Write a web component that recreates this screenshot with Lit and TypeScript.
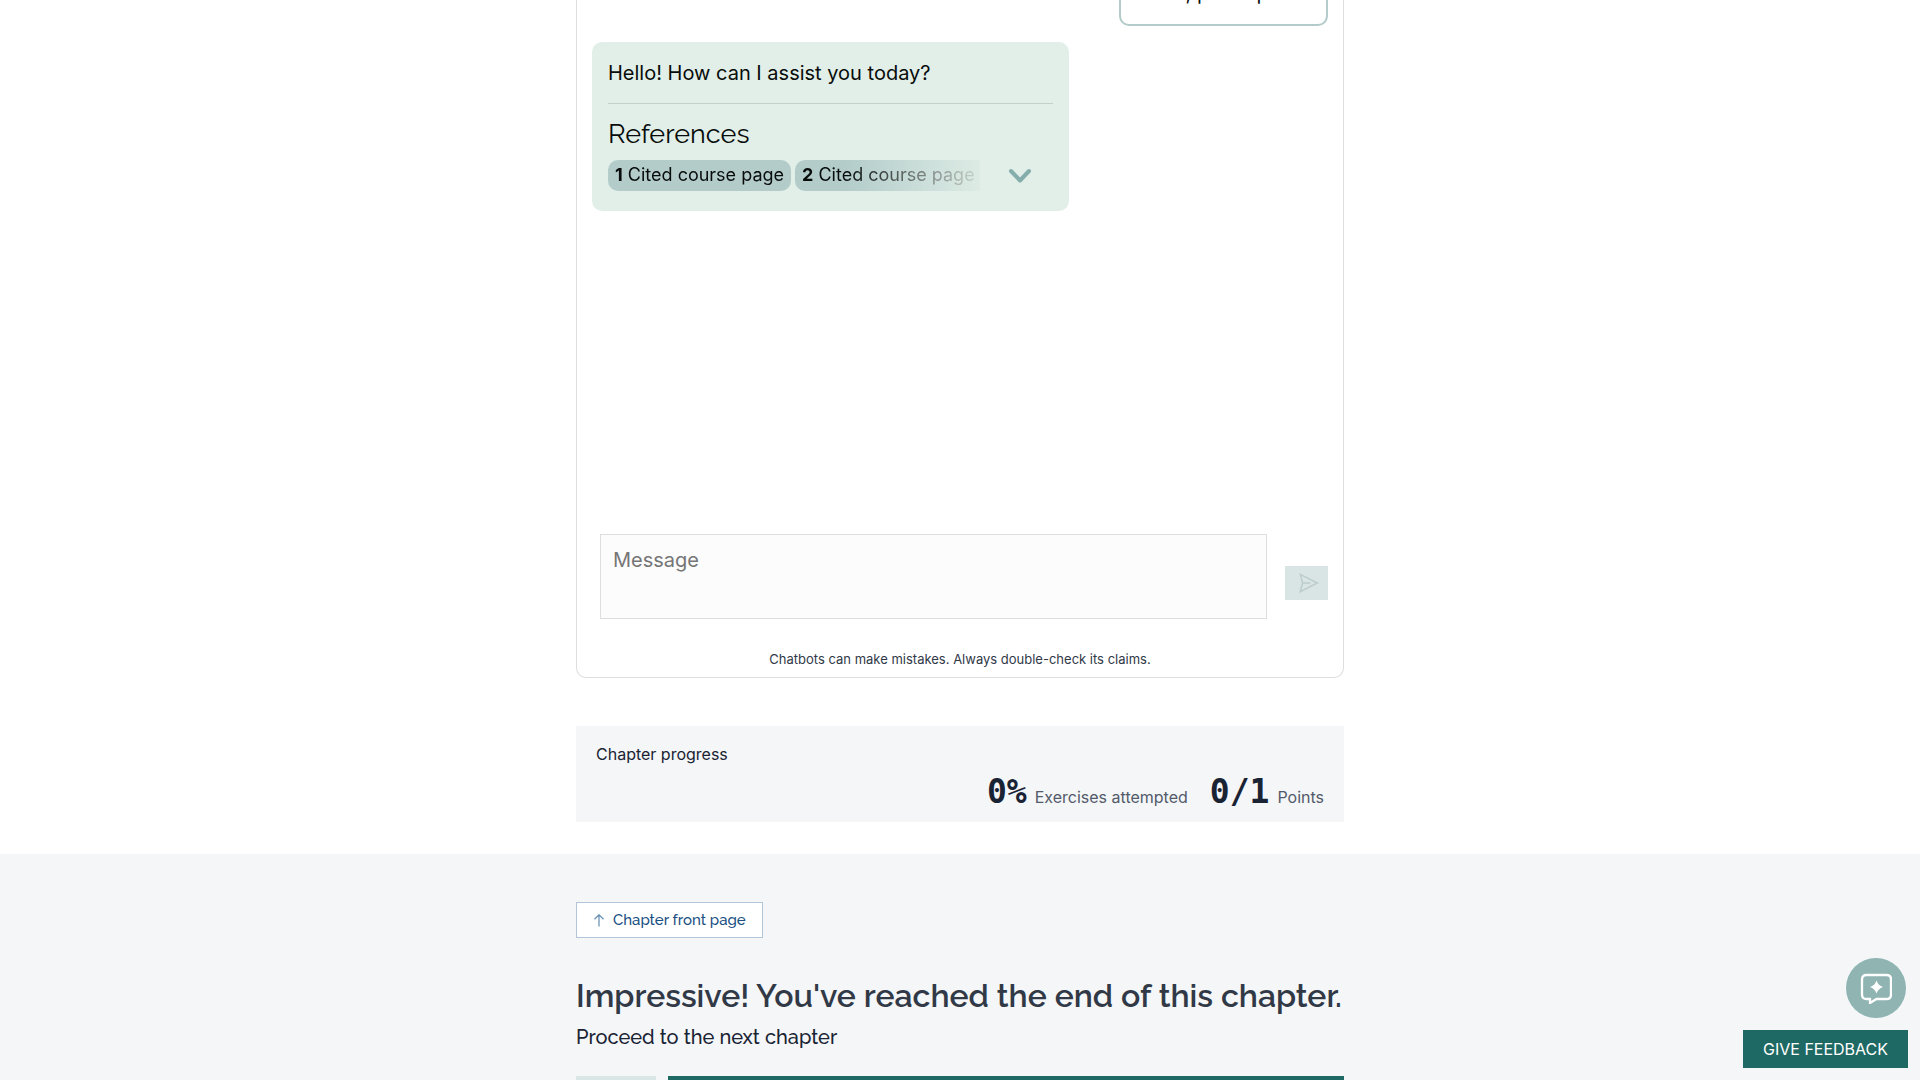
import { LitElement, html, css, svg } from "lit";
import { customElement, property } from "lit/decorators.js";

const chevronIcon = svg`<svg width="24" height="16" viewBox="0 0 24 16" fill="none" aria-hidden="true">
  <path d="M3 3l9 9.500 9-9.500" stroke="#84adab" stroke-width="4" stroke-linecap="round" stroke-linejoin="round"/>
</svg>`;

const sendIcon = svg`<svg width="20" height="20" viewBox="0 0 20 20" fill="none" aria-hidden="true">
  <path d="M1.3 1.3L18.3 10L1.3 18.7L3.6 10ZM3.6 10H11.5" stroke="#bccdcb" stroke-width="1.5"/>
</svg>`;

const arrowIcon = svg`<svg width="10" height="13" viewBox="0 0 10 13" fill="none" aria-hidden="true">
  <path d="M5 12.5V1M0.5 5.2L5 0.8L9.5 5.2" stroke="#658db0" stroke-width="1.2"/>
</svg>`;

const assistantIcon = svg`<svg width="32" height="32" viewBox="0 0 32 32" fill="none" aria-hidden="true">
  <path d="M6.500 3H26.500Q31 3 31 7.500V22.500Q31 27 26.500 27H16.500L10 31V27H6.500Q2 27 2 22.500V7.500Q2 3 6.500 3Z" stroke="#fff" stroke-width="2.300"/>
  <path d="M16.500 8.500Q18.200 13.500 23 15Q18.200 16.500 16.500 21.500Q14.800 16.500 10 15Q14.800 13.500 16.500 8.500Z" fill="#fff"/>
</svg>`;

@customElement("chat-panel")
export class ChatPanel extends LitElement {
  @property({ attribute: false }) citations = ["Cited course page", "Cited course page 2"];

  static styles = css`
    :host {
      display: block;
      border: 1px solid #dedede;
      border-top: 0;
      border-radius: 0 0 10px 10px;
      padding: 0 15px;
    }
    .messages {
      display: flex;
      flex-direction: column;
      gap: 16px;
      min-height: 574px;
      margin-top: -40px;
    }
    .bubble {
      box-sizing: border-box;
      border-radius: 10px;
      padding: 16px;
      color: #080c0b;
      font-size: 20px;
      line-height: 30px;
    }
    .user {
      align-self: flex-end;
      border: 2px solid #b3ccca;
    }
    .assistant {
      align-self: flex-start;
      width: 100%;
      max-width: 477px;
      background: #e2efe8;
      padding-bottom: 20px;
    }
    .bubble p {
      margin: 0;
    }
    hr {
      border: 0;
      border-top: 1px solid #c4cfca;
      margin: 15px 0 12px;
    }
    h3 {
      margin: 0 0 8px;
      font: 400 27px/36px Raleway, Lato, sans-serif;
    }
    .refs {
      display: flex;
      align-items: center;
      justify-content: space-between;
      padding-right: 21px;
    }
    .cites {
      display: flex;
      gap: 4px;
      width: 372px;
      overflow: hidden;
      -webkit-mask-image: linear-gradient(to right, #000 64%, transparent 104%);
      mask-image: linear-gradient(to right, #000 64%, transparent 104%);
    }
    .cite {
      flex: none;
      padding: 0 7px 1px;
      border-radius: 10px;
      background: #b3ccca;
      font-size: 18px;
      line-height: 30px;
      white-space: nowrap;
    }
    .toggle {
      display: flex;
      padding: 0;
      border: 0;
      background: none;
    }
    .composer {
      display: flex;
      align-items: center;
      gap: 18px;
      padding-left: 8px;
    }
    textarea {
      box-sizing: border-box;
      flex: 1;
      height: 85px;
      border: 1px solid #dedede;
      border-radius: 0;
      background: #fcfcfc;
      padding: 10px 12px;
      font: 400 20px/30px Inter, sans-serif;
      resize: none;
    }
    textarea::placeholder {
      color: #757575;
    }
    .send {
      display: flex;
      align-items: center;
      justify-content: center;
      width: 43px;
      height: 34px;
      margin-top: 12px;
      padding: 0 0 0 4px;
      border: 0;
      background: #d9e5e4;
    }
    .note {
      margin: 30px 0 7px;
      text-align: center;
      font-size: 13px;
      line-height: 21px;
      color: #313947;
    }
  `;

  render() {
    return html`
      <div class="messages">
        <div class="bubble user"><p>Hello, pirate print?</p></div>
        <div class="bubble assistant">
          <p>Hello! How can I assist you today?</p>
          <hr />
          <h3>References</h3>
          <div class="refs">
            <div class="cites">
              ${this.citations.map((c, i) => html`<span class="cite"><b>${i + 1}</b> ${c}</span>`)}
            </div>
            <button class="toggle" aria-label="Expand references">${chevronIcon}</button>
          </div>
        </div>
      </div>
      <div class="composer">
        <textarea aria-label="Message" placeholder="Message"></textarea>
        <button class="send" aria-label="Send" disabled>${sendIcon}</button>
      </div>
      <p class="note">Chatbots can make mistakes. Always double-check its claims.</p>
    `;
  }
}

@customElement("chapter-progress")
export class ChapterProgress extends LitElement {
  static styles = css`
    :host {
      display: block;
      background: #f4f6f8;
      padding: 16px 20px 8px;
      color: #1a2333;
    }
    h2 {
      margin: 0 0 4px;
      font-size: 16px;
      font-weight: 400;
      line-height: 24px;
    }
    .stats {
      display: flex;
      justify-content: flex-end;
      gap: 22px;
    }
    .stat {
      display: flex;
      align-items: baseline;
      gap: 8px;
    }
    .value {
      font: 700 33px/44px "DejaVu Sans Mono", monospace;
    }
    .label {
      font-size: 16px;
      line-height: 24px;
      color: #535a6a;
    }
  `;

  render() {
    return html`
      <h2>Chapter progress</h2>
      <div class="stats">
        <div class="stat"><span class="value">0%</span><span class="label">Exercises attempted</span></div>
        <div class="stat"><span class="value">0/1</span><span class="label">Points</span></div>
      </div>
    `;
  }
}

@customElement("app-root")
export class AppRoot extends LitElement {
  static styles = css`
    :host {
      display: flex;
      flex-direction: column;
      height: 100vh;
      overflow: hidden;
      background: #fff;
      font-family: Inter, sans-serif;
    }
    .column {
      box-sizing: border-box;
      width: 100%;
      max-width: 768px;
      margin: 0 auto;
    }
    main {
      padding-bottom: 32px;
    }
    chapter-progress {
      margin-top: 48px;
    }
    .next {
      flex: 1;
      background: #f4f6f8;
      padding-top: 48px;
      font-family: Raleway, Lato, sans-serif;
    }
    .front {
      display: inline-flex;
      align-items: center;
      gap: 9px;
      padding: 0 16px 0 17px;
      border: 1px solid #b1c6d8;
      background: #fff;
      color: #1a5083;
      font-size: 15px;
      font-weight: 500;
      line-height: 34px;
      text-decoration: none;
    }
    h1 {
      margin: 36px 0 0;
      font-size: 32px;
      font-weight: 600;
      line-height: 44px;
      color: #313947;
      white-space: nowrap;
    }
    .sub {
      margin: 4px 0 24px;
      font-size: 20px;
      font-weight: 500;
      line-height: 30px;
      color: #1a2333;
    }
    .nav {
      display: grid;
      grid-template-columns: 80px 1fr;
      gap: 12px;
    }
    .nav a {
      height: 64px;
      background: #1f6964;
    }
    .nav .prev {
      background: #dae6e5;
    }
    .floating {
      position: fixed;
      right: 12px;
      bottom: 12px;
      display: flex;
      flex-direction: column;
      align-items: flex-end;
      gap: 12px;
    }
    .assistant {
      display: flex;
      align-items: center;
      justify-content: center;
      width: 60px;
      height: 60px;
      margin-right: 2px;
      padding: 0;
      border: 0;
      border-radius: 50%;
      background: #8fb4b2;
    }
    .feedback {
      padding: 0 20px;
      border: 0;
      background: #1f6964;
      color: #fff;
      font: 400 16px/38px Inter, sans-serif;
      text-transform: uppercase;
    }
  `;

  render() {
    return html`
      <main class="column">
        <chat-panel></chat-panel>
        <chapter-progress></chapter-progress>
      </main>
      <section class="next">
        <div class="column">
          <a class="front" href="#chapter">${arrowIcon}<span>Chapter front page</span></a>
          <h1>Impressive! You've reached the end of this chapter.</h1>
          <p class="sub">Proceed to the next chapter</p>
          <nav class="nav" aria-label="Chapters">
            <a class="prev" href="#previous" aria-label="Previous chapter"></a>
            <a href="#next" aria-label="Next chapter"></a>
          </nav>
        </div>
      </section>
      <div class="floating">
        <button class="assistant" aria-label="Open assistant">${assistantIcon}</button>
        <button class="feedback">Give feedback</button>
      </div>
    `;
  }
}
